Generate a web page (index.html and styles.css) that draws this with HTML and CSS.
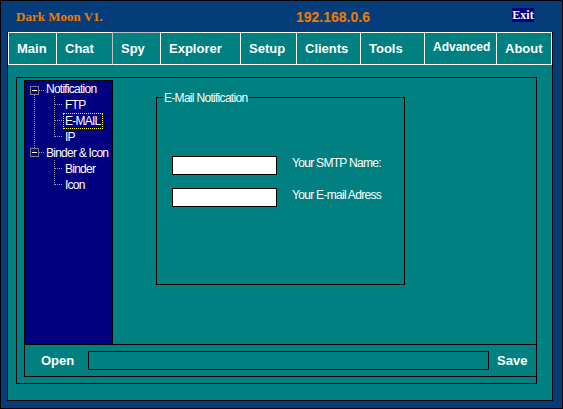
FILE: index.html
```html
<!DOCTYPE html>
<html>
<head>
<meta charset="utf-8">
<title>Dark Moon V1.</title>
<link rel="stylesheet" href="styles.css">
</head>
<body>
<div class="window">
  <div class="titlebar">
    <div class="app-title">Dark Moon V1.</div>
    <div class="ip">192.168.0.6</div>
    <div class="exit">Exit</div>
  </div>
  <div class="client">
    <nav class="tabs">
      <div class="tab tab-main">Main</div>
      <div class="tab tab-chat">Chat</div>
      <div class="tab tab-spy tab-hover">Spy</div>
      <div class="tab tab-explorer">Explorer</div>
      <div class="tab tab-setup">Setup</div>
      <div class="tab tab-clients">Clients</div>
      <div class="tab tab-tools">Tools</div>
      <div class="tab tab-advanced tab-small">Advanced</div>
      <div class="tab tab-about">About</div>
    </nav>
    <div class="frame">
      <div class="upper">
        <div class="tree">
          <svg class="tree-lines" width="87" height="120" viewBox="0 0 87 120" shape-rendering="crispEdges">
            <g fill="none" stroke="#9a9aa8" stroke-dasharray="1 1">
              <path d="M14 9.5H20"/>
              <path d="M9.5 14V67"/>
              <path d="M14 71.5H20"/>
              <path d="M29.5 15V56"/>
              <path d="M30 23.5H38"/>
              <path d="M30 39.5H38"/>
              <path d="M30 55.5H38"/>
              <path d="M29.5 79V104"/>
              <path d="M30 87.5H38"/>
              <path d="M30 103.5H38"/>
            </g>
            <rect x="5.5" y="5.5" width="8" height="8" fill="none" stroke="#808080"/>
            <rect x="7" y="9" width="5" height="1" fill="#ffffff"/>
            <rect x="5.5" y="67.5" width="8" height="8" fill="none" stroke="#808080"/>
            <rect x="7" y="71" width="5" height="1" fill="#ffffff"/>
          </svg>
          <div class="node node-root">Notification</div>
          <div class="node node-child">FTP</div>
          <div class="node node-child"><span class="node-selected">E-MAIL</span></div>
          <div class="node node-child">IP</div>
          <div class="node node-root">Binder &amp; Icon</div>
          <div class="node node-child">Binder</div>
          <div class="node node-child">Icon</div>
        </div>
        <div class="pane">
          <div class="group">
            <div class="group-title">E-Mail Notification</div>
            <div class="fields">
              <div class="field">
                <div class="textbox"></div>
                <span class="field-label">Your SMTP Name:</span>
              </div>
              <div class="field">
                <div class="textbox"></div>
                <span class="field-label">Your E-mail Adress</span>
              </div>
            </div>
          </div>
        </div>
      </div>
      <div class="lower">
        <span class="cmd-open">Open</span>
        <div class="pathbox"></div>
        <span class="cmd-save">Save</span>
      </div>
    </div>
  </div>
</div>
</body>
</html>
```
FILE: styles.css
```css
body {
  margin: 0;
  font-family: "Liberation Sans", Arial, sans-serif;
}

.window {
  width: 563px;
  height: 409px;
  box-sizing: border-box;
  border: 1px solid #000;
  background: #053c7a;
  padding-bottom: 7px;
  display: flex;
  flex-direction: column;
}

.titlebar {
  height: 31px;
  flex: none;
  display: grid;
  grid-template-columns: 295px 215px auto;
  align-items: center;
}

.app-title {
  padding-left: 15px;
  font-family: "Liberation Serif", "Times New Roman", serif;
  font-weight: bold;
  font-size: 13px;
  color: #f07c00;
}

.ip {
  font-weight: bold;
  font-size: 14px;
  color: #f07c00;
}

.exit {
  justify-self: start;
  align-self: start;
  margin: 7px 0 0 1px;
  width: 22px;
  height: 14px;
  line-height: 14px;
  background: #000080;
  color: #fff;
  font-family: "Liberation Serif", "Times New Roman", serif;
  font-weight: bold;
  font-size: 12px;
  text-align: center;
}

.client {
  flex: 1;
  margin: 0 9px 0 6px;
  border: 1px solid #000;
  border-top: 0;
  background: #008080;
}

.tabs {
  display: flex;
  height: 33px;
}

.tab {
  box-sizing: border-box;
  height: 33px;
  border: 1px solid #fff;
  border-right: 0;
  padding-left: 8px;
  color: #fff;
  font-weight: bold;
  font-size: 13px;
  line-height: 31px;
  white-space: nowrap;
}

.tab:last-child {
  border-right: 1px solid #fff;
}

.tab-hover {
  border-top-color: #c0c0c0;
  border-left-color: #c0c0c0;
}

.tab-small {
  font-size: 12px;
  line-height: 29px;
}

.tab-main { width: 48px; }
.tab-chat { width: 56px; }
.tab-spy { width: 48px; }
.tab-explorer { width: 80px; }
.tab-setup { width: 56px; }
.tab-clients { width: 64px; }
.tab-tools { width: 64px; }
.tab-advanced { width: 72px; }
.tab-about { width: 56px; }

.frame {
  margin: 12px 0 0 8px;
  width: 521px;
  height: 307px;
  box-sizing: border-box;
  border: 1px solid #000;
  padding: 2px 0 0 7px;
}

.upper {
  display: flex;
  height: 264px;
}

.tree {
  position: relative;
  flex: none;
  width: 89px;
  box-sizing: border-box;
  border: 1px solid #000;
  border-bottom: 0;
  background: #000080;
  color: #fff;
  font-size: 12px;
  letter-spacing: -0.75px;
}

.tree-lines {
  position: absolute;
  left: 0;
  top: 0;
}

.node {
  position: relative;
  height: 16px;
  line-height: 16px;
  white-space: nowrap;
}

.node-root {
  padding-left: 21px;
}

.node-child {
  padding-left: 40px;
}

.node-selected {
  display: inline-block;
  vertical-align: top;
  margin-left: -2px;
  padding: 0 1px;
  line-height: 14px;
  border: 1px dotted #ffff00;
}

.pane {
  flex: 1;
  padding: 17px 0 0 43px;
}

.group {
  width: 249px;
  height: 188px;
  box-sizing: border-box;
  border: 1px solid #000;
  color: #fff;
  font-size: 12px;
  letter-spacing: -0.7px;
}

.group-title {
  width: fit-content;
  margin: -6px 0 0 6px;
  padding: 0 1px;
  line-height: 13px;
  background: #008080;
}

.fields {
  margin-top: 51px;
  padding-left: 15px;
  display: flex;
  flex-direction: column;
  gap: 13px;
}

.field {
  display: flex;
  align-items: flex-start;
}

.textbox {
  width: 105px;
  height: 19px;
  box-sizing: border-box;
  border: 1px solid #000;
  background: #fff;
}

.field-label {
  margin-left: 15px;
  line-height: 14px;
}

.lower {
  display: flex;
  align-items: center;
  height: 33px;
  box-sizing: border-box;
  border: 1px solid #000;
  margin-right: -1px;
  padding-left: 16px;
  color: #fff;
  font-weight: bold;
  font-size: 13px;
}

.cmd-open {
  width: 47px;
}

.pathbox {
  width: 401px;
  height: 19px;
  box-sizing: border-box;
  border: 1px solid #000;
}

.cmd-save {
  margin-left: 8px;
}
```
